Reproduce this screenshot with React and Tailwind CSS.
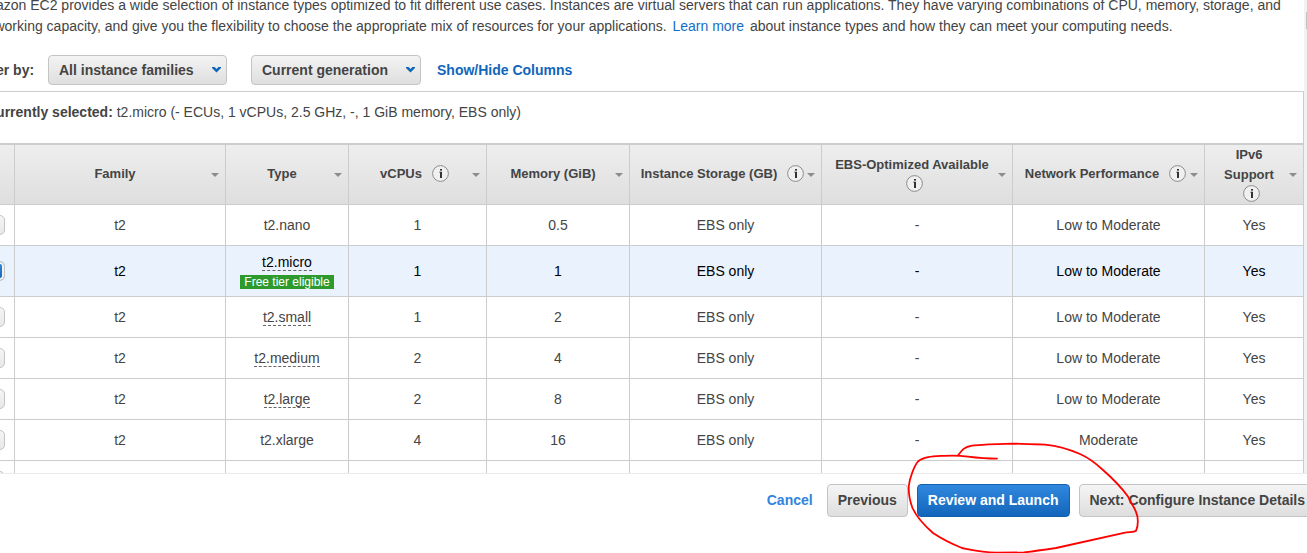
import React from "react";

const columns = [
  { label: "Family", width: "w-[211px]" },
  { label: "Type", width: "w-[123px]" },
  { label: "vCPUs", width: "w-[138px]", info: true },
  { label: "Memory (GiB)", width: "w-[143px]" },
  { label: "Instance Storage (GB)", width: "w-[192px]", info: true },
  { label: "EBS-Optimized Available", width: "w-[191px]", info: true, stacked: true },
  { label: "Network Performance", width: "w-[192px]", info: true },
  { label: "IPv6 Support", width: "w-[98px]", info: true, stacked: true },
];

const instances = [
  { type: "t2.nano", cpu: "1", mem: "0.5", net: "Low to Moderate" },
  { type: "t2.micro", cpu: "1", mem: "1", net: "Low to Moderate", hint: true, free: true },
  { type: "t2.small", cpu: "1", mem: "2", net: "Low to Moderate", hint: true },
  { type: "t2.medium", cpu: "2", mem: "4", net: "Low to Moderate", hint: true },
  { type: "t2.large", cpu: "2", mem: "8", net: "Low to Moderate", hint: true },
  { type: "t2.xlarge", cpu: "4", mem: "16", net: "Moderate" },
  { type: "t2.2xlarge", cpu: "8", mem: "32", net: "Moderate" },
];

function InfoIcon() {
  return (
    <svg className="-mr-1 h-[17px] w-[17px] shrink-0" viewBox="0 0 17 17" aria-hidden="true">
      <circle cx="8.5" cy="8.5" r="7.9" fill="#f0f0f0" stroke="#8c8c8c" strokeWidth="1" />
      <rect x="8" y="4" width="2" height="1.6" fill="#333" />
      <path d="M7.2 6.8H10V13H8V7.6h-.8z" fill="#333" />
    </svg>
  );
}

function Filter({ id, label, width, options }) {
  return (
    <div className={`relative ${width}`}>
      <select
        id={id}
        aria-label={label}
        className="h-[30px] w-full appearance-none rounded-[4px] border border-[#c4c4c4] bg-linear-to-b from-[#f3f3f3] to-[#dfdfdf] pl-2.5 text-sm font-bold text-[#444]"
      >
        {options.map((o) => (
          <option key={o}>{o}</option>
        ))}
      </select>
      <svg
        className="pointer-events-none absolute top-3 right-1.5 h-[6px] w-[9px]"
        viewBox="0 0 9 6"
        aria-hidden="true"
      >
        <path d="M0 0h2.6l1.9 1.9L6.4 0H9v1L4.5 5.5 0 1z" fill="#1166bb" />
      </svg>
    </div>
  );
}

function Cell({ children }) {
  return <td className="border-r border-b border-[#ccc] p-0 last:border-r-0">{children}</td>;
}

export default function App() {
  return (
    <div className="relative flex h-screen flex-col overflow-hidden bg-white font-['Liberation_Sans',Arial,sans-serif] text-sm text-[#444]">
      <div className="flex min-h-0 flex-1">
        <main className="-mt-[5px] -ml-[25px] min-w-0 flex-1 overflow-hidden">
          <p className="leading-[21px] whitespace-nowrap">
            Amazon EC2 provides a wide selection of instance types optimized to fit different use
            cases. Instances are virtual servers that can run applications. They have varying
            combinations of CPU, memory, storage, and
            <br />
            networking capacity, and give you the flexibility to choose the appropriate mix of
            resources for your applications.{" "}
            <a href="#learn" className="mx-0.5 text-[#146ec8]">
              Learn more
            </a>{" "}
            about instance types and how they can meet your computing needs.
          </p>

          <div className="mt-[18px] mb-1.5 flex items-center">
            <label htmlFor="family" className="w-[73px] font-bold whitespace-nowrap">
              Filter by:
            </label>
            <Filter
              id="family"
              label="Instance family"
              width="w-[179px]"
              options={["All instance families", "General purpose", "Compute optimized"]}
            />
            <div className="w-6" />
            <Filter
              id="generation"
              label="Generation"
              width="w-[170px]"
              options={["Current generation", "All generations"]}
            />
            <a href="#columns" className="ml-4 font-bold text-[#1166bb]">
              Show/Hide Columns
            </a>
          </div>

          <section className="border border-[#ccc]">
            <p className="px-2.5 pt-2.5 pb-[21px] leading-5">
              <strong>Currently selected:</strong> t2.micro (- ECUs, 1 vCPUs, 2.5 GHz, -, 1 GiB
              memory, EBS only)
            </p>
            <table className="w-full table-fixed border-separate border-spacing-0 border-t-2 border-[#ccc] text-center">
              <thead className="text-[13px]">
                <tr className="bg-linear-to-b from-[#eee] to-[#dedede]">
                  <th className="h-[60px] w-[39px] border-r border-b border-[#ccc] p-0" aria-label="Select" />
                  {columns.map((c) => (
                    <th
                      key={c.label}
                      className={`${c.width} h-[60px] border-r border-b border-[#ccc] p-0 last:border-r-0`}
                    >
                      <div className="flex items-center pr-1.5 pl-1">
                        <div
                          className={
                            c.stacked
                              ? "flex flex-1 flex-col items-center pb-0.5 leading-5"
                              : "flex flex-1 items-center justify-center gap-2.5 pb-0.5 leading-5 whitespace-nowrap"
                          }
                        >
                          <span>{c.label}</span>
                          {c.info && <InfoIcon />}
                        </div>
                        <svg className="h-1 w-2 shrink-0" viewBox="0 0 8 4" aria-hidden="true">
                          <path d="M0 0h8L4 4z" fill="#8c8c8c" />
                        </svg>
                      </div>
                    </th>
                  ))}
                </tr>
              </thead>
              <tbody>
                {instances.map((r) => (
                  <tr key={r.type} className={r.free ? "h-[51px] bg-[#eaf2fe] text-black" : "h-[41px]"}>
                    <Cell>
                      <input
                        type="checkbox"
                        aria-label={`Select ${r.type}`}
                        defaultChecked={r.free}
                        className="mx-auto block size-5 appearance-none rounded-[5px] border border-[#c4c4c4] bg-linear-to-b from-[#f5f5f5] to-[#e8e8e8] checked:from-[#3388dd] checked:to-[#1166bb] checked:shadow-[inset_0_0_0_2px_#f2f2f2]"
                      />
                    </Cell>
                    <Cell>t2</Cell>
                    <Cell>
                      <div className="flex flex-col items-center gap-1">
                        <span
                          className={
                            r.hint
                              ? "border-b border-dashed border-[#666] leading-4"
                              : "leading-4"
                          }
                        >
                          {r.type}
                        </span>
                        {r.free && (
                          <span className="bg-[#2e9a2e] px-1 text-xs leading-[14px] whitespace-nowrap text-white">
                            Free tier eligible
                          </span>
                        )}
                      </div>
                    </Cell>
                    <Cell>{r.cpu}</Cell>
                    <Cell>{r.mem}</Cell>
                    <Cell>EBS only</Cell>
                    <Cell>-</Cell>
                    <Cell>{r.net}</Cell>
                    <Cell>Yes</Cell>
                  </tr>
                ))}
              </tbody>
            </table>
          </section>
        </main>
        <div className="w-[3px] bg-[#f1f1f1] pt-3">
          <div className="ml-auto h-[17px] w-px bg-[#c1c1c1]" />
        </div>
      </div>

      <footer className="-mr-[9px] flex h-20 shrink-0 items-start justify-end gap-[9px] border-t border-[#eaeaea] bg-white pt-2.5 font-bold whitespace-nowrap">
        <a href="#cancel" className="mr-[5px] leading-[33px] text-[#3184dd]">
          Cancel
        </a>
        <button className="h-[33px] rounded-[4px] border border-[#c4c4c4] bg-linear-to-b from-[#f5f5f5] to-[#dedede] px-2.5 pb-0.5">
          Previous
        </button>
        <button className="h-[33px] rounded-[4px] border border-[#1560aa] bg-linear-to-b from-[#3088de] to-[#1166bb] px-2.5 pb-0.5 text-white">
          Review and Launch
        </button>
        <button className="h-[33px] rounded-[4px] border border-[#c4c4c4] bg-linear-to-b from-[#f5f5f5] to-[#dedede] px-2.5 pb-0.5">
          Next: Configure Instance Details
        </button>
      </footer>

      <svg
        className="pointer-events-none absolute right-[162px] bottom-0 h-[115px] w-[245px]"
        viewBox="900 438 245 115"
        fill="none"
        stroke="#ff0000"
        strokeWidth="1.8"
        strokeLinecap="round"
        strokeLinejoin="round"
        aria-hidden="true"
      >
        <path d="M997 458.6C990 458.6 976 457.6 968 456.6C961 455.6 952 455.3 944 455.8C934 456.4 924 456.4 918 461.5C914 466 909.5 479 908.8 486C908.4 494 909.5 500 912.5 508C916 516 925 526 933 533C942 539 952 544 962 548C975 550.5 984 552.4 996 552.6L1024 552.5C1036 551 1046 549.5 1056 548L1124 532.8C1130 531.8 1134 532.4 1136 530.8C1138.5 526 1138.4 517 1136 512C1134 506 1130 502 1128 496.5C1121 487 1111 477 1103 470C1096 463.5 1088 457.5 1080 454C1070 449.5 1058 446 1045 444.6C1035 444 1024 443.9 1012 443.6C998 443.6 984 444.8 972 445.6C964 447 962 450 958 455.5" />
      </svg>
    </div>
  );
}
